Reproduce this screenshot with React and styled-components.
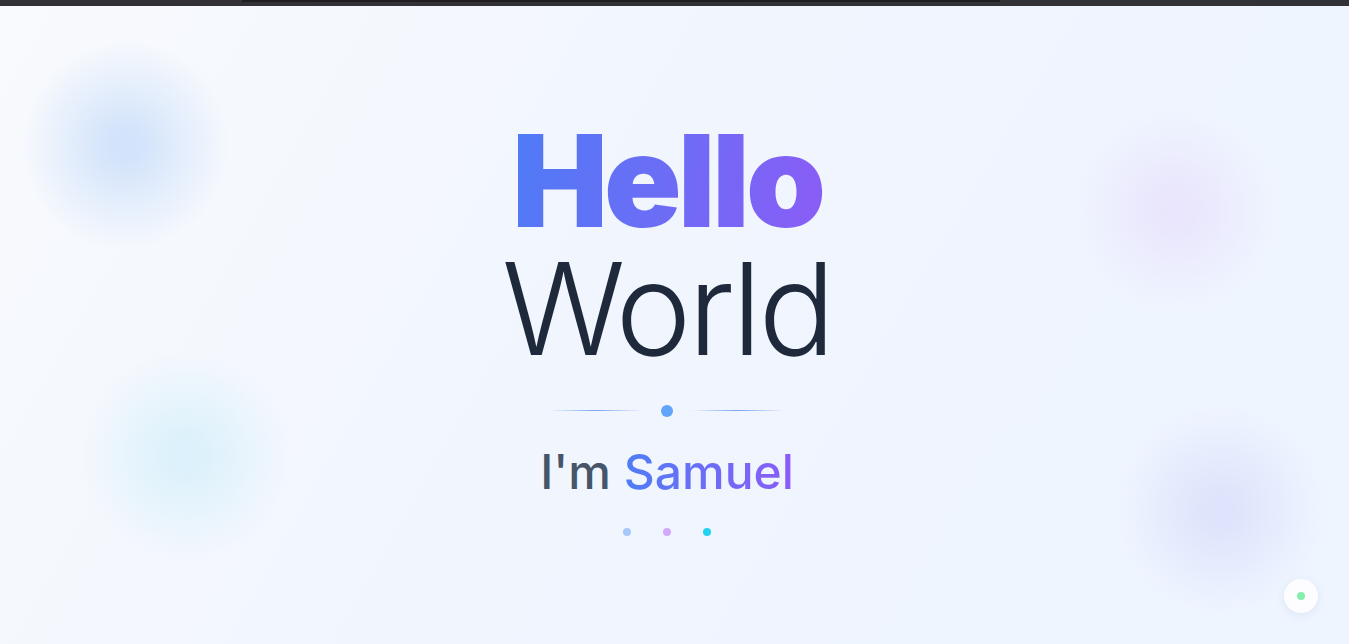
import React from "react";
import styled, { createGlobalStyle } from "styled-components";

const Global = createGlobalStyle`
  html, body { margin: 0; padding: 0; height: 100%; }
  body { font-family: Inter, "Noto Sans", sans-serif; overflow: hidden; }
  * { box-sizing: border-box; }
`;

const Page = styled.div`
  width: 100%;
  height: 644px;
  display: flex;
  flex-direction: column;
  background: #2f2f33;
`;

const TopBar = styled.div`
  height: 6px;
  flex: none;
  background: #323236;
  display: flex;
  justify-content: flex-start;
  padding-left: 242px;
`;

const TopBarLine = styled.div`
  width: 758px;
  height: 2px;
  background: #1f1f22;
`;

const Stage = styled.main`
  position: relative;
  flex: 1;
  overflow: hidden;
  background: linear-gradient(120deg, #f8fafd 0%, #f0f5fe 50%, #eef5ff 100%);
  display: flex;
  flex-direction: column;
  align-items: center;
  justify-content: center;
  padding: 3px 15px 0 0;
`;

const Blob = styled.div`
  position: absolute;
  left: ${(p) => p.$x - p.$r}px;
  top: ${(p) => p.$y - p.$r}px;
  width: ${(p) => p.$r * 2}px;
  height: ${(p) => p.$r * 2}px;
  border-radius: 50%;
  background: radial-gradient(circle, ${(p) => p.$c} 0%, ${(p) => p.$c} 10%, transparent 70%);
  pointer-events: none;
`;

const Title = styled.h1`
  margin: 0;
  display: flex;
  flex-direction: column;
  align-items: center;
  position: relative;
`;

const Hello = styled.span`
  font-size: 128px;
  line-height: 1;
  font-weight: 900;
  letter-spacing: -0.03em;
  background: linear-gradient(100deg, #4e7bf6 0%, #6d6cf5 50%, #8b5cf6 100%);
  -webkit-background-clip: text;
  background-clip: text;
  color: transparent;
  padding: 0 0.03em 0 0;
  margin-right: -0.03em;
`;

const World = styled.span`
  font-size: 128px;
  line-height: 1;
  font-weight: 300;
  letter-spacing: -0.026em;
  color: #1e293b;
`;

const Divider = styled.div`
  margin-top: 32px;
  display: flex;
  align-items: center;
  gap: 18px;
  position: relative;
`;

const Line = styled.div`
  width: 94px;
  height: 1px;
  background: linear-gradient(90deg, transparent, #5b8ef0 50%, transparent);
  opacity: 0.8;
`;

const Dot = styled.div`
  width: ${(p) => p.$size}px;
  height: ${(p) => p.$size}px;
  border-radius: 50%;
  background: ${(p) => p.$color};
`;

const Subtitle = styled.p`
  margin: 26px 0 0;
  font-size: 48px;
  line-height: 1.2;
  font-weight: 500;
  color: #475569;
  position: relative;
`;

const Name = styled.span`
  background: linear-gradient(90deg, #4f7df6, #8b5cf6);
  -webkit-background-clip: text;
  background-clip: text;
  color: transparent;
`;

const Dots = styled.div`
  margin-top: 28px;
  display: flex;
  gap: 32px;
  position: relative;
`;

const FloatButton = styled.button`
  position: absolute;
  right: 31px;
  bottom: 31px;
  width: 34px;
  height: 34px;
  border-radius: 50%;
  border: none;
  background: #fdfdff;
  box-shadow: 0 2px 8px rgba(100, 116, 180, 0.12);
  display: flex;
  align-items: center;
  justify-content: center;
  padding: 0;
`;

export default function App() {
  return (
    <>
      <Global />
      <Page>
        <TopBar>
          <TopBarLine />
        </TopBar>
        <Stage>
          <Blob $x={125} $y={139} $r={105} $c="rgba(202,222,250,0.8)" />
          <Blob $x={185} $y={449} $r={105} $c="rgba(212,239,250,0.75)" />
          <Blob $x={1175} $y={204} $r={105} $c="rgba(232,226,252,0.8)" />
          <Blob $x={1220} $y={504} $r={105} $c="rgba(219,223,251,0.8)" />
          <Title>
            <Hello>Hello</Hello>
            <World>World</World>
          </Title>
          <Divider>
            <Line />
            <Dot $size={12} $color="#60a5fa" />
            <Line />
          </Divider>
          <Subtitle>
            I'm <Name>Samuel</Name>
          </Subtitle>
          <Dots>
            <Dot $size={8} $color="#a7c8fb" />
            <Dot $size={8} $color="#d2a9fb" />
            <Dot $size={8} $color="#22d3ee" />
          </Dots>
          <FloatButton aria-label="status">
            <Dot $size={8} $color="#86efac" />
          </FloatButton>
        </Stage>
      </Page>
    </>
  );
}
